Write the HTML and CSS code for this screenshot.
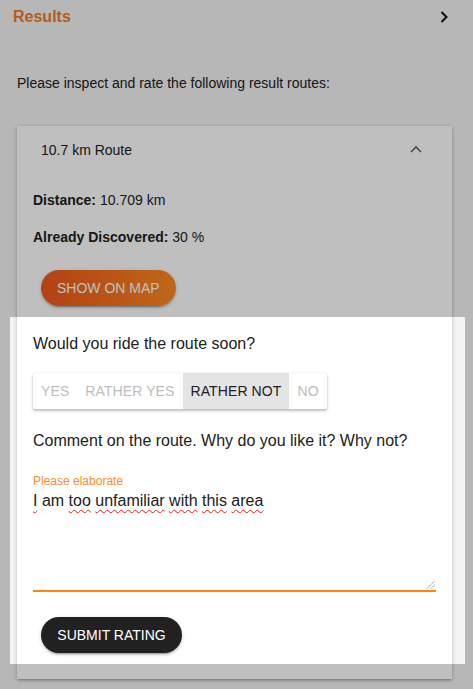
FILE: index.html
```html
<!DOCTYPE html>
<html lang="en">
<head>
<meta charset="utf-8">
<title>Results</title>
<link rel="stylesheet" href="styles.css">
</head>
<body>
<header class="topbar">
  <span class="title">Results</span>
  <svg class="chev-right" width="8" height="12" viewBox="0 0 8 12"><polyline points="1.5,1 6.5,6 1.5,11" fill="none" stroke="#111" stroke-width="2"/></svg>
</header>
<p class="intro">Please inspect and rate the following result routes:</p>
<section class="card">
  <div class="panel-head">
    <span>10.7 km Route</span>
    <span class="icon-box"><svg width="12" height="8" viewBox="0 0 12 8"><polyline points="1,7 6,2 11,7" fill="none" stroke="#666" stroke-width="1.6"/></svg></span>
  </div>
  <div class="panel-body">
    <p class="stat"><b>Distance:</b> 10.709 km</p>
    <p class="stat stat2"><b>Already Discovered:</b> 30 %</p>
    <button class="btn btn-map">SHOW ON MAP</button>
    <div class="rating">
      <div class="spot"></div>
      <p class="question">Would you ride the route soon?</p>
      <div class="toggle">
        <span class="opt">YES</span>
        <span class="opt">RATHER YES</span>
        <span class="opt sel">RATHER NOT</span>
        <span class="opt">NO</span>
      </div>
      <p class="question q2">Comment on the route. Why do you like it? Why not?</p>
      <div class="field">
        <label class="flabel">Please elaborate</label>
        <div class="farea"><span class="sp">I</span> am <span class="sp">too</span> <span class="sp">unfamiliar</span> <span class="sp">with</span> <span class="sp">this</span> <span class="sp">area</span>
          <svg class="grip" width="9" height="9" viewBox="0 0 9 9"><line x1="1" y1="8.5" x2="8.5" y2="1" stroke="#555" stroke-width="1" stroke-dasharray="1 1"/><line x1="5" y1="8.5" x2="8.5" y2="5" stroke="#555" stroke-width="1" stroke-dasharray="1 1"/></svg>
        </div>
      </div>
      <button class="btn btn-submit">SUBMIT RATING</button>
    </div>
  </div>
</section>
</body>
</html>
```
FILE: styles.css
```css
html, body {
  margin: 0;
  padding: 0;
  overflow: hidden;
}
body {
  background: #f4f4f4;
  font-family: "Liberation Sans", Arial, sans-serif;
  color: #212121;
  width: 473px;
  height: 689px;
}
p { margin: 0; }
.topbar {
  height: 34px;
  display: flex;
  align-items: center;
  justify-content: space-between;
  padding: 0 25px 0 13px;
}
.title {
  color: #f5792a;
  font-weight: bold;
  font-size: 16px;
}
.intro {
  margin: 39px 0 0 17px;
  font-size: 14px;
  line-height: 20px;
}
.card {
  margin: 33px 21px 0 17px;
  background: #fff;
  box-shadow: 0 2px 2px -1px rgba(0,0,0,.2), 0 1px 3px 0 rgba(0,0,0,.14), 0 1px 5px 0 rgba(0,0,0,.12);
  padding-bottom: 15px;
}
.panel-head {
  height: 48px;
  display: flex;
  align-items: center;
  justify-content: space-between;
  padding: 0 24px;
  font-size: 14px;
}
.icon-box {
  width: 24px;
  height: 24px;
  display: flex;
  align-items: center;
  justify-content: center;
  margin-top: -3px;
}
.panel-body {
  padding: 16px 16px 0;
}
.stat {
  font-size: 14px;
  line-height: 20px;
}
.stat2 { margin-top: 17px; }
.btn {
  display: block;
  border: 0;
  height: 36px;
  padding: 0 16px;
  border-radius: 18px;
  font-family: "Liberation Sans", Arial, sans-serif;
  font-size: 14px;
  color: #fff;
  margin-left: 8px;
  box-shadow: 0 3px 1px -2px rgba(0,0,0,.2), 0 2px 2px 0 rgba(0,0,0,.14), 0 1px 5px 0 rgba(0,0,0,.12);
}
.btn-map {
  margin-top: 23px;
  background: linear-gradient(90deg, #f0581c, #ff8a22);
}
.rating {
  position: relative;
  margin-top: 11px;
  padding: 17px 0 11px;
}
.spot {
  position: absolute;
  top: 0;
  bottom: 0;
  left: -23px;
  right: -29px;
  box-shadow: 0 0 0 2000px rgba(0,0,0,.25);
  pointer-events: none;
  z-index: 10;
}
.question {
  font-size: 16px;
  line-height: 20px;
}
.toggle {
  display: inline-flex;
  margin-top: 19px;
  height: 36px;
  background: #fff;
  border-radius: 2px;
  overflow: hidden;
  box-shadow: 0 2px 3px rgba(0,0,0,.25), 0 0 2px rgba(0,0,0,.1);
}
.opt {
  display: flex;
  align-items: center;
  padding: 0 8px;
  font-size: 14px;
  color: #bdbdbd;
  letter-spacing: 0.1px;
}
.opt.sel {
  background: #e4e4e4;
  color: #212121;
}
.q2 { margin-top: 22px; }
.field {
  margin-top: 23px;
}
.flabel {
  display: block;
  font-size: 12px;
  line-height: 14px;
  color: #ff8a1e;
}
.farea {
  position: relative;
  margin-top: 3px;
  height: 99px;
  font-size: 16px;
  line-height: 20px;
  border-bottom: 2px solid #ff8800;
}
.sp {
  text-decoration: underline wavy #e02020;
  text-decoration-thickness: 1px;
  text-underline-offset: 3px;
}
.grip {
  position: absolute;
  right: 1px;
  bottom: 1px;
}
.btn-submit {
  margin-top: 25px;
  background: #212121;
  width: 141px;
}
```
